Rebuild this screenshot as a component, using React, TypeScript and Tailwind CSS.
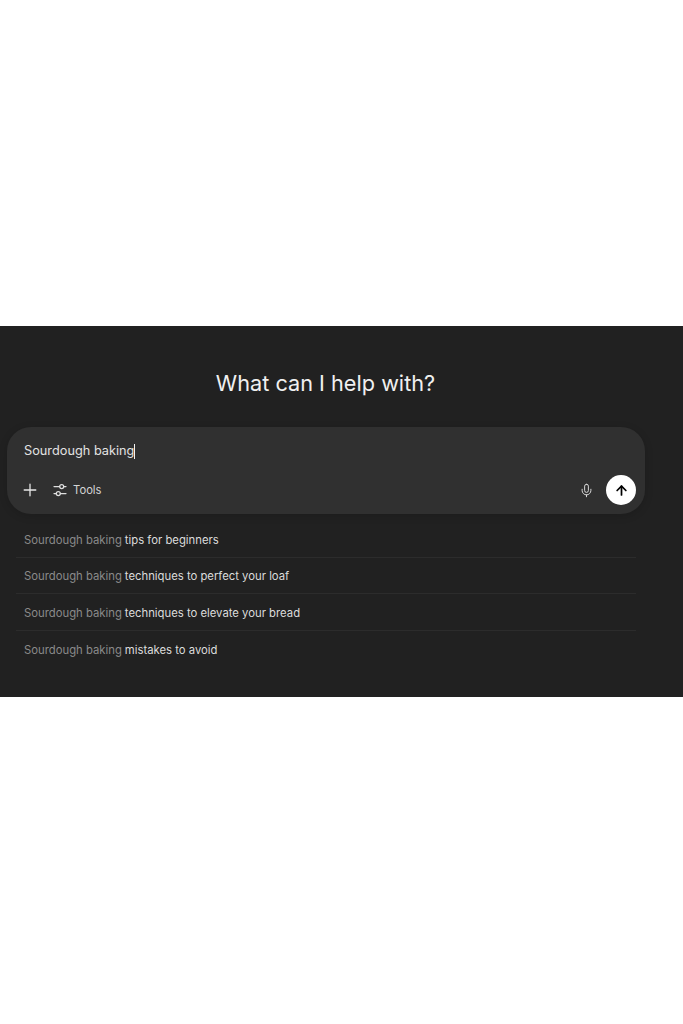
import { Mic, ArrowUp } from 'lucide-react';

const suggestions = [
  'tips for beginners',
  'techniques to perfect your loaf',
  'techniques to elevate your bread',
  'mistakes to avoid',
];

const ToolsIcon = () => (
  <svg width="14" height="14" viewBox="0 0 14 14" fill="none" stroke="#dedede" strokeWidth="1.25" strokeLinecap="round">
    <path d="M1 3.5H6.6M10.8 3.5H13" />
    <circle cx="8.7" cy="3.5" r="2" />
    <path d="M1 10.5H3.2M7.4 10.5H13" />
    <circle cx="5.3" cy="10.5" r="2" />
  </svg>
);

const PlusIcon = () => (
  <svg width="14" height="14" viewBox="0 0 14 14" fill="none" stroke="#e6e6e6" strokeWidth="1.3" strokeLinecap="round">
    <path d="M7 1.2V12.8M1.2 7H12.8" />
  </svg>
);

const App = () => {
  return (
    <div className="flex flex-col w-[683px] h-[1024px] bg-white font-['Inter',sans-serif] overflow-hidden">
      <div className="h-[326px] shrink-0" />

      <div className="h-[371px] shrink-0 bg-[#212121] pl-[7px] pt-[42px]">
        <h1 className="w-[637px] text-center text-[21.7px] leading-[30px] font-normal text-[#f0f0f0]">
          What can I help with?
        </h1>

        <div className="mt-[29px] w-[638px] h-[87px] rounded-[24px] bg-[#303030] shadow-[0_2px_8px_rgba(0,0,0,0.15)] pl-[16px] pr-[9px] pt-[15px] flex flex-col">
          <div className="flex items-center h-[18px] pl-px text-[12.75px] text-[#e2e2e2]">
            Sourdough baking
            <span className="w-px h-[15px] bg-[#f2f2f2]" />
          </div>

          <div className="mt-[15px] flex items-center justify-between">
            <div className="flex items-center">
              <PlusIcon />
              <div className="ml-[16px]">
                <ToolsIcon />
              </div>
              <span className="ml-[6px] text-[11.25px] text-[#d4d4d4]">Tools</span>
            </div>
            <div className="flex items-center gap-[12px]">
              <Mic className="w-[15px] h-[15px] text-[#d9d9d9]" strokeWidth={1.6} />
              <div className="w-[30px] h-[30px] rounded-full bg-white flex items-center justify-center">
                <ArrowUp className="w-[15px] h-[15px] text-black" strokeWidth={2.75} />
              </div>
            </div>
          </div>
        </div>

        <ul className="mt-[7px] ml-[9px] w-[620px]">
          {suggestions.map((text) => (
            <li
              key={text}
              className="h-[36.5px] pl-[8px] pt-[3px] flex items-center text-[11.3px] border-b border-[#2c2c2c] last:border-b-0"
            >
              <span className="text-[#8a8a8a]">Sourdough baking</span>
              <span className="ml-[3px] text-[#dcdcdc]">{text}</span>
            </li>
          ))}
        </ul>
      </div>

      <div className="flex-1 bg-white" />
    </div>
  );
};

export default App;
